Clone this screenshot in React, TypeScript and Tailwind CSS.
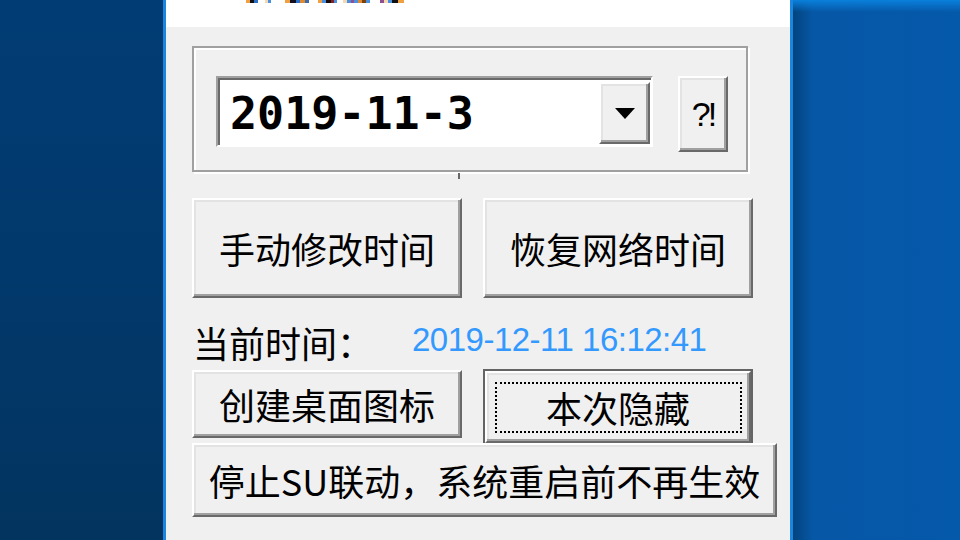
import React from "react";

const cjk = { fontFamily: '"Noto Sans CJK SC", "Noto Sans", sans-serif' };

const bevel =
  "bg-[#f0f0f0] border-2 border-t-white border-l-white border-b-[#696969] border-r-[#696969] shadow-[inset_-2px_-2px_0_#a0a0a0,inset_2px_2px_0_#e3e3e3]";

function Btn({ w, h, children, className = "" }: { w: string; h: string; children: React.ReactNode; className?: string }) {
  return (
    <div className={`${w} ${h} ${bevel} flex items-center justify-center text-[36px] leading-[40px] text-black shrink-0 ${className}`} style={cjk}>
      {children}
    </div>
  );
}

function TitleSpecks() {
  const rects: [number, number, string][] = [
    [0, 4, "#f0a040"], [4, 4, "#101010"], [8, 4, "#2a70c8"], [19, 3, "#f4d9b0"], [22, 3, "#4a90e0"],
    [39, 5, "#f0a040"], [44, 6, "#101020"], [50, 4, "#2a70c8"], [54, 5, "#e08a30"], [59, 4, "#3a6ab0"],
    [72, 4, "#f0a040"], [76, 4, "#4a90e0"], [80, 5, "#1a0a0a"], [85, 3, "#802020"], [88, 3, "#4a90e0"],
    [97, 4, "#f4d9b0"], [101, 4, "#4a90e0"], [105, 3, "#905090"], [108, 4, "#4a90e0"], [112, 4, "#e08a30"], [116, 4, "#7a4010"], [120, 4, "#4a90e0"],
    [134, 4, "#905090"], [138, 4, "#f4d9b0"], [142, 4, "#4a90e0"], [146, 6, "#101010"], [152, 6, "#f0a040"],
  ];
  return (
    <svg width="160" height="4" className="absolute left-[80px] top-0">
      {rects.map(([x, w, c], i) => (
        <rect key={i} x={x} y={0} width={w} height={3} fill={c} />
      ))}
    </svg>
  );
}

export default function App() {
  return (
    <div className="w-[960px] h-[540px] flex overflow-hidden">
      <div className="w-[163px] h-full bg-[linear-gradient(to_bottom,#013c74,#02396c_50%,#03345f)]" />
      <div className="w-[630px] h-full flex flex-col border-x-[3px] border-[#1a86e0] shrink-0">
        <div className="h-[27px] bg-white relative shrink-0">
          <TitleSpecks />
        </div>
        <div className="flex-1 bg-[#f0f0f0] pl-[26px] pt-[19px] flex flex-col">
          {/* group box */}
          <div className="relative w-[556px] h-[126px] border-2 border-[#a0a0a0] shadow-[inset_2px_2px_0_#ffffff,2px_2px_0_#ffffff] flex items-start pl-[22px] pt-[28px] shrink-0">
            <div className="w-[437px] h-[71px] border-2 border-t-[#a0a0a0] border-l-[#a0a0a0] border-b-white border-r-white shadow-[inset_2px_2px_0_#696969] bg-white flex items-stretch pt-[4px] pb-[1px] pr-[1px]">
              <div
                className="flex-1 flex items-center pl-[12px] text-[45px] font-bold text-black leading-none"
                style={{ fontFamily: '"DejaVu Sans Mono", "Liberation Mono", monospace' }}
              >
                2019-11-3
              </div>
              <div className={`w-[51px] ${bevel} flex items-center justify-center`}>
                <svg width="20" height="11" viewBox="0 0 20 11">
                  <polygon points="0,0 20,0 10,11" fill="#000" />
                </svg>
              </div>
            </div>
            <div
              className={`ml-[25px] w-[50px] h-[76px] ${bevel} flex items-center justify-center text-[34px] tracking-[-3px] text-black`}
              style={{ fontFamily: '"Liberation Sans", Arial, sans-serif' }}
            >
              ?!
            </div>
            <div className="absolute left-[264px] top-[125px] w-[2px] h-[6px] bg-[#696969]" />
          </div>

          {/* row 2 */}
          <div className="mt-[26px] flex gap-[21px] shrink-0">
            <Btn w="w-[270px]" h="h-[100px]">手动修改时间</Btn>
            <Btn w="w-[270px]" h="h-[100px]">恢复网络时间</Btn>
          </div>

          {/* label row */}
          <div className="pt-[24px] h-[64px] flex items-start shrink-0">
            <div className="w-[219px] ml-[1px] text-[36px] leading-[40px] text-black" style={cjk}>
              当前时间：
            </div>
            <div
              className="mt-[1px] text-[33px] leading-[34px] tracking-[-0.5px] text-[#3399ff]"
              style={{ fontFamily: '"Liberation Sans", Arial, sans-serif' }}
            >
              2019-12-11 16:12:41
            </div>
          </div>

          {/* row 4 */}
          <div className="mt-[8px] h-[73px] flex items-start gap-[21px] shrink-0">
            <Btn w="w-[270px]" h="h-[68px]">创建桌面图标</Btn>
            <div className="-mt-[1px] w-[270px] h-[76px] border-2 border-[#646464] shrink-0 flex">
              <div className={`relative flex-1 ${bevel} flex items-center justify-center text-[36px] leading-[40px] text-black`} style={cjk}>
                <div className="absolute left-[8px] top-[9px] right-[7px] bottom-[8px] border-2 border-dotted border-black" />
                本次隐藏
              </div>
            </div>
          </div>

          {/* row 5 */}
          <Btn w="w-[585px]" h="h-[74px]">停止SU联动，系统重启前不再生效</Btn>
        </div>
      </div>
      <div className="flex-1 h-full bg-[linear-gradient(to_right,#03447e,#0657a6_12%,#0559aa)] relative">
        <div className="absolute inset-x-0 top-0 h-[12px] bg-[linear-gradient(to_bottom,#0a80dc,rgba(6,88,170,0))]" />
      </div>
    </div>
  );
}
